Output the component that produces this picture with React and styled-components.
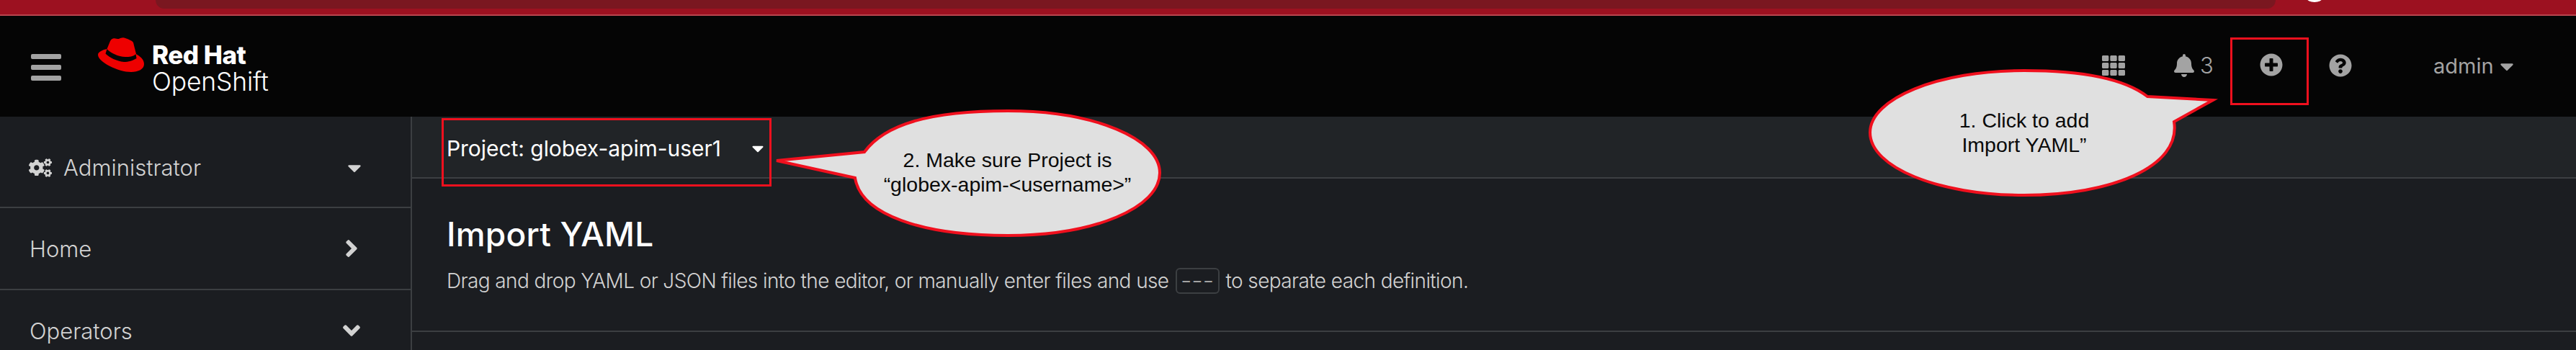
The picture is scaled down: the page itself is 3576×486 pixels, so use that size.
import styled, { createGlobalStyle } from "styled-components";
import {
    FaAngleDown,
    FaAngleRight,
    FaBell,
    FaCaretDown,
    FaCogs,
    FaPlusCircle,
    FaQuestionCircle,
    FaTh,
} from "react-icons/fa";

const GlobalStyle = createGlobalStyle`
    html, body {
        margin: 0;
        padding: 0;
        background: #1b1d21;
        overflow: hidden;
    }
    * {
        box-sizing: border-box;
    }
`;

const App = () => {
    return (
        <Page>
            <GlobalStyle />
            <Banner>
                <BannerTab />
                <BannerDot />
            </Banner>
            <Masthead>
                <Hamburger>
                    <span />
                    <span />
                    <span />
                </Hamburger>
                <Brand>
                    <HatLogo width="64" height="48" viewBox="0 0 64 48">
                        <path
                            fill="#ee0000"
                            d="M21 1.5C24 .5 27 2.5 29 2C32 .5 35-.5 38 1C43 3 47 4 49 7L53 23C58 26 64 30 64 37C64 44 56 48 46 48C28 48 0 34 0 24C0 20 7 17 12.5 16L17 5C18 3 19 2 21 1.5Z"
                        />
                        <path
                            fill="#050505"
                            d="M12.5 16C18 22 28 26.5 38 27C44 27.5 50 26 52.5 23L53.5 29C49 32 42 34 36 34C26 33 16 28 10.5 22.5Z"
                        />
                    </HatLogo>
                    <BrandText>
                        <strong>Red Hat</strong>
                        <span>OpenShift</span>
                    </BrandText>
                </Brand>
                <Tools>
                    <ToolIcon $left={2918} $top={53} $size={32}>
                        <FaTh />
                    </ToolIcon>
                    <ToolIcon $left={3016} $top={53} $size={32}>
                        <FaBell />
                    </ToolIcon>
                    <BellCount>3</BellCount>
                    <ToolIcon $left={3137} $top={52} $size={32}>
                        <FaPlusCircle />
                    </ToolIcon>
                    <ToolIcon $left={3233} $top={53} $size={32}>
                        <FaQuestionCircle />
                    </ToolIcon>
                    <UserMenu>
                        admin
                        <FaCaretDown />
                    </UserMenu>
                </Tools>
            </Masthead>
            <Body>
                <Sidebar>
                    <NavRow $height={127} $offset={16}>
                        <NavLabel>
                            <FaCogs />
                            Administrator
                        </NavLabel>
                        <NavCaret>
                            <FaCaretDown />
                        </NavCaret>
                    </NavRow>
                    <NavRow $height={114}>
                        <NavLabel>Home</NavLabel>
                        <NavChevron>
                            <FaAngleRight />
                        </NavChevron>
                    </NavRow>
                    <NavRow $height={114}>
                        <NavLabel>Operators</NavLabel>
                        <NavChevron>
                            <FaAngleDown />
                        </NavChevron>
                    </NavRow>
                </Sidebar>
                <Main>
                    <ProjectBar>
                        <ProjectName>Project: globex-apim-user1</ProjectName>
                        <ProjectCaret>
                            <FaCaretDown />
                        </ProjectCaret>
                    </ProjectBar>
                    <PageHeader>
                        <Title>Import YAML</Title>
                        <Description>
                            Drag and drop YAML or JSON files into the editor, or manually enter files and use
                            <Code>---</Code>
                            to separate each definition.
                        </Description>
                    </PageHeader>
                </Main>
            </Body>

            <Highlight $left={613} $top={164} $width={458} $height={95} />
            <Highlight $left={3096} $top={52} $width={109} $height={94} />

            <Callout $left={1070} $top={148} $width={546} $height={185}>
                <svg width="546" height="185" viewBox="0 0 546 185">
                    <path
                        fill="#e0e0e0"
                        stroke="#f0101e"
                        strokeWidth="4"
                        d="M8 75L130 63C158 25 220 6 329 6C450 6 540 45 540 92C540 140 450 179 329 179C210 179 125 150 117 99Z"
                    />
                </svg>
                <CalloutText $left={117} $width={423} $top={57}>
                    2. Make sure Project is
                    <br />
                    “globex-apim-&lt;username&gt;”
                </CalloutText>
            </Callout>

            <Callout $left={2590} $top={92} $width={490} $height={185}>
                <svg width="490" height="185" viewBox="0 0 490 185">
                    <path
                        fill="#e0e0e0"
                        stroke="#f0101e"
                        strokeWidth="4"
                        d="M482 47L391 42C360 18 300 6 220 6C100 6 6 45 6 92C6 140 100 179 220 179C340 179 438 140 428 77Z"
                    />
                </svg>
                <CalloutText $left={6} $width={428} $top={58}>
                    1. Click to add
                    <br />
                    Import YAML”
                </CalloutText>
            </Callout>
        </Page>
    );
};

const Page = styled.div`
    position: relative;
    width: 3576px;
    height: 486px;
    overflow: hidden;
    font-family: Inter, "Open Sans", sans-serif;
    background: #1b1d21;
`;

const Banner = styled.div`
    position: relative;
    height: 22px;
    background: #9c1120;
    border-bottom: 2px solid #b8444e;
`;

const BannerTab = styled.div`
    position: absolute;
    left: 216px;
    top: 0;
    width: 2943px;
    height: 12px;
    background: #7a1720;
    border-radius: 0 0 22px 22px;
`;

const BannerDot = styled.div`
    position: absolute;
    left: 3202px;
    top: -9px;
    width: 22px;
    height: 12px;
    background: #fff;
    border-radius: 50%;
`;

const Masthead = styled.header`
    position: relative;
    display: flex;
    align-items: center;
    height: 140px;
    background: #050505;
`;

const Hamburger = styled.div`
    display: flex;
    flex-direction: column;
    gap: 8px;
    width: 42px;
    margin-left: 43px;
    margin-top: 3px;

    span {
        display: block;
        height: 7px;
        background: #a3a3a3;
        border-radius: 2px;
    }
`;

const Brand = styled.div`
    display: flex;
    align-items: flex-start;
    gap: 11px;
    margin-left: 51px;
`;

const HatLogo = styled.svg`
    display: block;
`;

const BrandText = styled.div`
    display: flex;
    flex-direction: column;
    margin-top: 5px;
    color: #fff;

    strong {
        font-size: 35px;
        line-height: 38px;
        font-weight: 800;
        letter-spacing: -0.5px;
    }

    span {
        font-size: 35.5px;
        line-height: 38px;
        font-weight: 300;
        letter-spacing: -0.2px;
    }
`;

const Tools = styled.div`
    color: #a3a3a3;
`;

const ToolIcon = styled.div`
    position: absolute;
    left: ${(props) => props.$left}px;
    top: ${(props) => props.$top}px;
    display: flex;
    font-size: ${(props) => props.$size}px;
`;

const BellCount = styled.div`
    position: absolute;
    left: 3054px;
    top: 49px;
    font-size: 31px;
    line-height: 40px;
    font-weight: 300;
`;

const UserMenu = styled.div`
    position: absolute;
    left: 3378px;
    top: 49px;
    display: flex;
    align-items: center;
    gap: 0;
    font-size: 29px;
    line-height: 42px;
    font-weight: 400;

    svg {
        font-size: 30px;
        margin-left: 3px;
    }
`;

const Body = styled.div`
    display: flex;
    height: 324px;
`;

const Sidebar = styled.nav`
    flex: 0 0 572px;
    background: #1b1d21;
    border-right: 2px solid #3c3f42;
`;

const NavRow = styled.div`
    display: flex;
    align-items: center;
    justify-content: space-between;
    height: ${(props) => props.$height}px;
    padding: ${(props) => props.$offset || 0}px 63px 0 41px;
    border-bottom: 2px solid #3c3f42;
    color: #d2d2d2;
`;

const NavLabel = styled.div`
    display: flex;
    align-items: center;
    gap: 16px;
    font-size: 31px;
    font-weight: 300;

    svg {
        font-size: 32px;
        margin-left: -1px;
    }
`;

const NavCaret = styled.div`
    display: flex;
    font-size: 30px;
`;

const NavChevron = styled.div`
    display: flex;
    font-size: 38px;
`;

const Main = styled.main`
    flex: 1;
`;

const ProjectBar = styled.div`
    display: flex;
    align-items: center;
    height: 86px;
    padding: 3px 0 0 48px;
    background: #212427;
    border-bottom: 2px solid #3c3f42;
    color: #fff;
`;

const ProjectName = styled.div`
    font-size: 30px;
    font-weight: 400;
    letter-spacing: -0.05px;
`;

const ProjectCaret = styled.div`
    display: flex;
    margin-left: 38px;
    font-size: 26px;
`;

const PageHeader = styled.div`
    height: 213px;
    padding: 49px 0 0 48px;
    border-bottom: 2px solid #3c3f42;
`;

const Title = styled.h1`
    margin: 0;
    font-size: 46px;
    line-height: 56px;
    font-weight: 500;
    letter-spacing: 0.2px;
    color: #fff;
`;

const Description = styled.p`
    display: flex;
    align-items: center;
    margin: 17px 0 0;
    font-size: 28px;
    line-height: 40px;
    font-weight: 300;
    letter-spacing: -0.6px;
    color: #d2d2d2;
`;

const Code = styled.span`
    display: inline-flex;
    align-items: center;
    justify-content: center;
    width: 61px;
    height: 36px;
    margin: 0 9px;
    font-size: 34px;
    letter-spacing: 0;
    color: #a3a3a3;
    border: 2px solid #3c3f42;
    border-radius: 6px;
`;

const Highlight = styled.div`
    position: absolute;
    left: ${(props) => props.$left}px;
    top: ${(props) => props.$top}px;
    width: ${(props) => props.$width}px;
    height: ${(props) => props.$height}px;
    border: 3px solid #f0101e;
`;

const Callout = styled.div`
    position: absolute;
    left: ${(props) => props.$left}px;
    top: ${(props) => props.$top}px;
    width: ${(props) => props.$width}px;
    height: ${(props) => props.$height}px;

    svg {
        display: block;
    }
`;

const CalloutText = styled.div`
    position: absolute;
    left: ${(props) => props.$left}px;
    top: ${(props) => props.$top}px;
    width: ${(props) => props.$width}px;
    font-family: "Liberation Sans", Arial, sans-serif;
    font-size: 28.5px;
    line-height: 34px;
    text-align: center;
    color: #0a0a0a;
`;

export default App;
